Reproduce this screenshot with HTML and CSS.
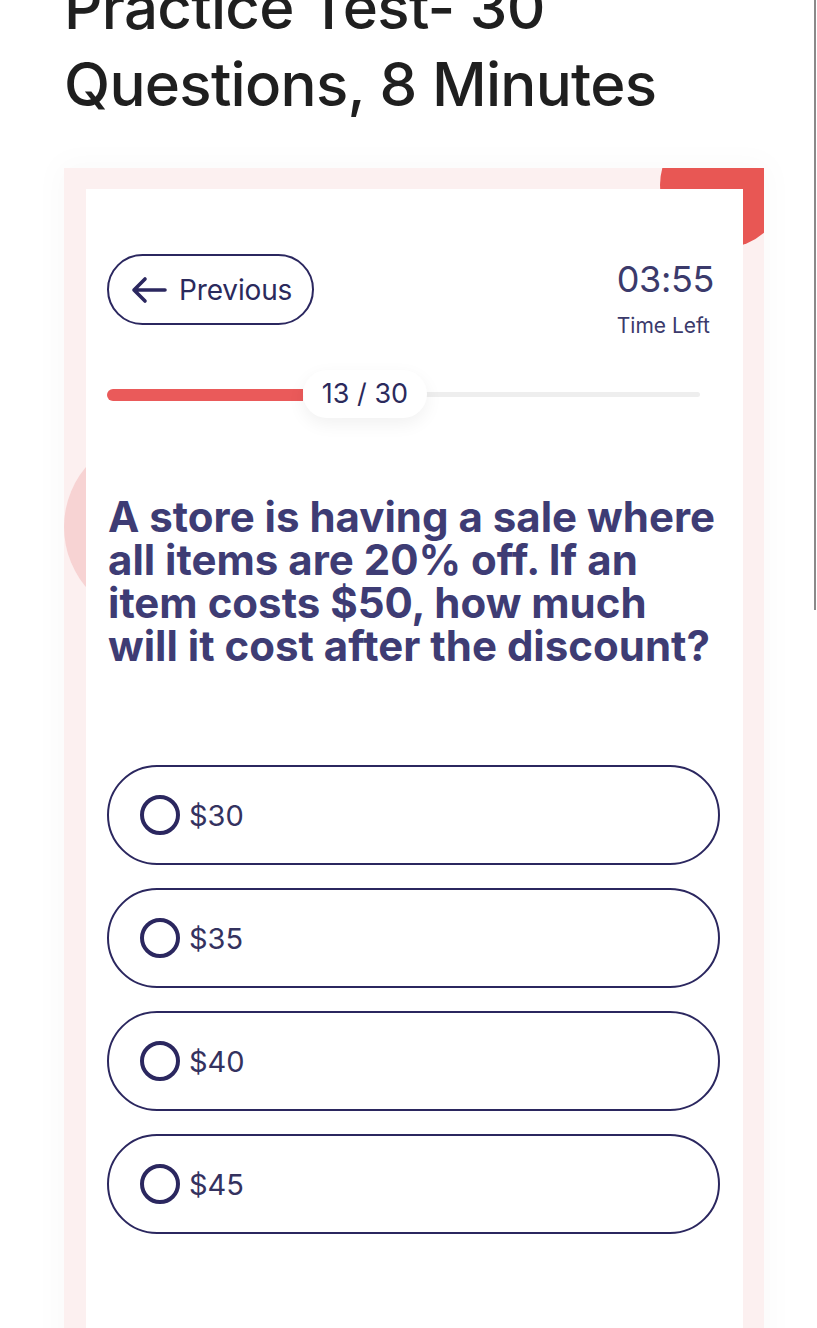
FILE: index.html
```html
<!DOCTYPE html>
<html lang="en">
<head>
<meta charset="utf-8">
<title>Practice Test</title>
<link rel="stylesheet" href="styles.css">
</head>
<body>
<div class="scrollbar"></div>
<main class="page">
  <h1 class="title">Practice Test- 30 Questions, 8 Minutes</h1>
  <div class="halo">
    <section class="frame">
      <div class="blob blob-red"></div>
      <div class="blob blob-pink"></div>
      <div class="card">
        <div class="top-row">
          <button class="prev-btn" type="button">
            <svg class="arrow" width="36" height="28" viewBox="0 0 36 28" fill="none">
              <path d="M34 14H3M14 3L3 14L14 25" stroke="#2b275f" stroke-width="3.6" stroke-linecap="round" stroke-linejoin="round"/>
            </svg>
            <span>Previous</span>
          </button>
          <div class="timer">
            <div class="timer-value">03:55</div>
            <div class="timer-label">Time Left</div>
          </div>
        </div>
        <div class="progress">
          <div class="track"></div>
          <div class="fill" style="width: 196px"></div>
          <div class="badge">13 / 30</div>
        </div>
        <h2 class="question">A store is having a sale where all items are 20% off. If an item costs $50, how much will it cost after the discount?</h2>
        <ul class="options">
          <li class="option"><span class="radio"></span><span class="opt-text">$30</span></li>
          <li class="option"><span class="radio"></span><span class="opt-text">$35</span></li>
          <li class="option"><span class="radio"></span><span class="opt-text">$40</span></li>
          <li class="option"><span class="radio"></span><span class="opt-text">$45</span></li>
        </ul>
      </div>
    </section>
  </div>
</main>
</body>
</html>
```
FILE: styles.css
```css
* { box-sizing: border-box; }
html, body { margin: 0; padding: 0; background: #ffffff; overflow: hidden; }
body { font-family: "Inter", "Liberation Sans", sans-serif; color: #2b275f; }

.scrollbar {
  position: fixed;
  top: 0;
  right: 1px;
  width: 2px;
  height: 610px;
  background: #8a8a8a;
  z-index: 10;
}

.page { padding: 0 0 0 64px; }

.title {
  margin: -31px 0 0 0;
  width: 660px;
  font-size: 60px;
  line-height: 77px;
  font-weight: 500;
  letter-spacing: -0.012em;
  color: #1f1f1f;
}

.halo {
  margin-top: 45px;
  width: 700px;
}

.frame {
  position: relative;
  overflow: hidden;
  width: 700px;
  height: 1200px;
  padding: 21px 21px 0 22px;
  background: #fcf0f0;
  box-shadow: 0 0 30px 6px rgba(0,0,0,0.025);
}

.blob { position: absolute; border-radius: 50%; }
.blob-red { left: 596px; top: -46px; width: 126px; height: 126px; background: #e85754; }
.blob-pink { left: 0; top: 266px; width: 186px; height: 186px; background: #f7d3d3; }

.card {
  position: relative;
  background: #ffffff;
  height: 100%;
  padding: 65px 23px 0 21px;
}

.top-row {
  display: flex;
  justify-content: space-between;
  align-items: flex-start;
}

.prev-btn {
  display: flex;
  align-items: center;
  gap: 12px;
  height: 71px;
  width: 207px;
  padding: 0 0 0 22px;
  border: 2px solid #2b275f;
  border-radius: 36px;
  background: #ffffff;
  font-family: inherit;
  font-size: 28px;
  color: #2b2a5c;
  letter-spacing: -0.005em;
}
.arrow { display: block; }

.timer {
  text-align: right;
  padding: 4px 6px 0 0;
}
.timer-value {
  font-size: 36px;
  line-height: 42px;
  color: #3b3a6b;
  letter-spacing: -0.01em;
}
.timer-label {
  margin-top: 14px;
  font-size: 21px;
  line-height: 24px;
  color: #3b3a6b;
  padding-right: 4px;
}

.progress {
  position: relative;
  margin-top: 32px;
  width: 593px;
  height: 48px;
}
.track {
  position: absolute;
  left: 0; right: 0; top: 22px;
  height: 5px;
  border-radius: 3px;
  background: #eeeeee;
}
.fill {
  position: absolute;
  left: 0; top: 19px;
  height: 12px;
  border-radius: 6px 0 0 6px;
  background: #ea5a5a;
}
.badge {
  position: absolute;
  left: 196px; top: 0;
  width: 124px;
  height: 48px;
  border-radius: 24px;
  background: #ffffff;
  box-shadow: 0 6px 18px rgba(0,0,0,0.06);
  font-size: 27px;
  line-height: 48px;
  text-align: center;
  color: #2b2a5c;
}

.question {
  margin: 77px 0 0 1px;
  max-width: 612px;
  font-size: 42px;
  line-height: 43px;
  font-weight: 700;
  letter-spacing: 0;
  color: #3e3c74;
}

.options {
  list-style: none;
  margin: 98px 0 0 0;
  padding: 0;
  display: flex;
  flex-direction: column;
  gap: 23px;
}
.option {
  display: flex;
  align-items: center;
  gap: 9px;
  height: 100px;
  padding-left: 31px;
  border: 2px solid #2b275f;
  border-radius: 50px;
}
.radio {
  width: 40px;
  height: 40px;
  border: 4.5px solid #2b275f;
  border-radius: 50%;
}
.opt-text {
  font-size: 29px;
  color: #34325f;
}
```
